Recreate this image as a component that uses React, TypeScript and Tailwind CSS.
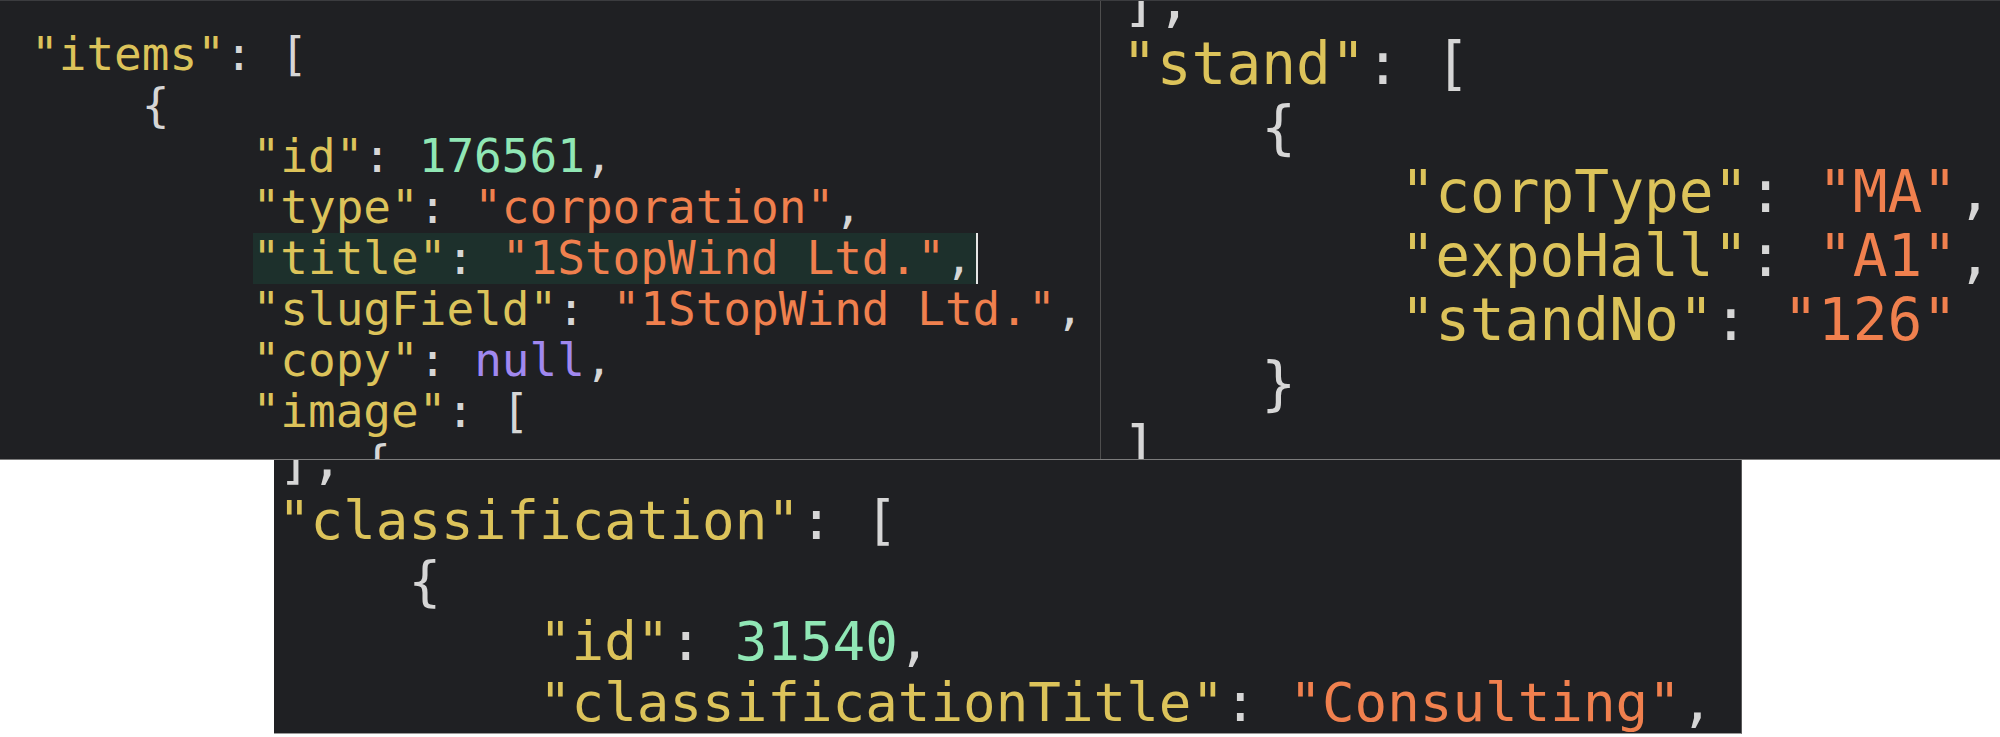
import React from "react";

type Tok = { c: string; t: string };

const K = "text-[#dcc35a]";
const S = "text-[#f0804e]";
const N = "text-[#90e7b5]";
const L = "text-[#a088f0]";
const P = "text-[#d6d6d6]";

const k = (t: string): Tok => ({ c: K, t });
const s = (t: string): Tok => ({ c: S, t });
const n = (t: string): Tok => ({ c: N, t });
const l = (t: string): Tok => ({ c: L, t });
const p = (t: string): Tok => ({ c: P, t });

type LineDef = { indent: number; toks: Tok[]; hl?: boolean };

function Toks({ toks }: { toks: Tok[] }) {
  return (
    <>
      {toks.map((tk, i) => (
        <span key={i} className={tk.c}>
          {tk.t}
        </span>
      ))}
    </>
  );
}

function Line({ def }: { def: LineDef }) {
  return (
    <div className="whitespace-pre">
      {" ".repeat(def.indent)}
      {def.hl ? (
        <span className="inline-block bg-[#1d302c] border-r-2 border-[#e6e6e6] pr-[3px]">
          <Toks toks={def.toks} />
        </span>
      ) : (
        <Toks toks={def.toks} />
      )}
    </div>
  );
}

const leftLines: LineDef[] = [
  { indent: 0, toks: [k('"items"'), p(": [")] },
  { indent: 4, toks: [p("{")] },
  { indent: 8, toks: [k('"id"'), p(": "), n("176561"), p(",")] },
  { indent: 8, toks: [k('"type"'), p(": "), s('"corporation"'), p(",")] },
  { indent: 8, toks: [k('"title"'), p(": "), s('"1StopWind Ltd."'), p(",")], hl: true },
  { indent: 8, toks: [k('"slugField"'), p(": "), s('"1StopWind Ltd."'), p(",")] },
  { indent: 8, toks: [k('"copy"'), p(": "), l("null"), p(",")] },
  { indent: 8, toks: [k('"image"'), p(": [")] },
  { indent: 12, toks: [p("{")] },
];

const rightLines: LineDef[] = [
  { indent: 0, toks: [p("],")] },
  { indent: 0, toks: [k('"stand"'), p(": [")] },
  { indent: 4, toks: [p("{")] },
  { indent: 8, toks: [k('"corpType"'), p(": "), s('"MA"'), p(",")] },
  { indent: 8, toks: [k('"expoHall"'), p(": "), s('"A1"'), p(",")] },
  { indent: 8, toks: [k('"standNo"'), p(": "), s('"126"')] },
  { indent: 4, toks: [p("}")] },
  { indent: 0, toks: [p("]")] },
];

const bottomLines: LineDef[] = [
  { indent: 0, toks: [p("],")] },
  { indent: 0, toks: [k('"classification"'), p(": [")] },
  { indent: 4, toks: [p("{")] },
  { indent: 8, toks: [k('"id"'), p(": "), n("31540"), p(",")] },
  { indent: 8, toks: [k('"classificationTitle"'), p(": "), s('"Consulting"'), p(",")] },
];

export default function App() {
  return (
    <div className="w-[2000px] h-[737px] bg-white flex flex-col overflow-hidden font-['DejaVu_Sans_Mono',monospace]">
      <div className="h-[460px] flex border-t border-b border-t-[#3b3c3f] border-b-[#7c7c7c] bg-[#1f2023]">
        <div className="w-[1101px] h-full border-r border-[#4e4e4e] overflow-hidden pl-[31px] pt-[28px] text-[46px] leading-[51px]">
          {leftLines.map((d, i) => (
            <Line key={i} def={d} />
          ))}
        </div>
        <div className="flex-1 h-full overflow-hidden pl-[21px] text-[57.8px] leading-[64px]">
          <div className="-mt-[33px]">
            {rightLines.map((d, i) => (
              <Line key={i} def={d} />
            ))}
          </div>
        </div>
      </div>
      <div className="ml-[274px] w-[1468px] h-[274px] bg-[#1f2023] border-r border-b border-r-[#5a5a5a] border-b-[#9a9a9a] overflow-hidden pl-[4px] text-[54.2px] leading-[60.8px]">
        <div className="-mt-[30px]">
          {bottomLines.map((d, i) => (
            <Line key={i} def={d} />
          ))}
        </div>
      </div>
    </div>
  );
}
